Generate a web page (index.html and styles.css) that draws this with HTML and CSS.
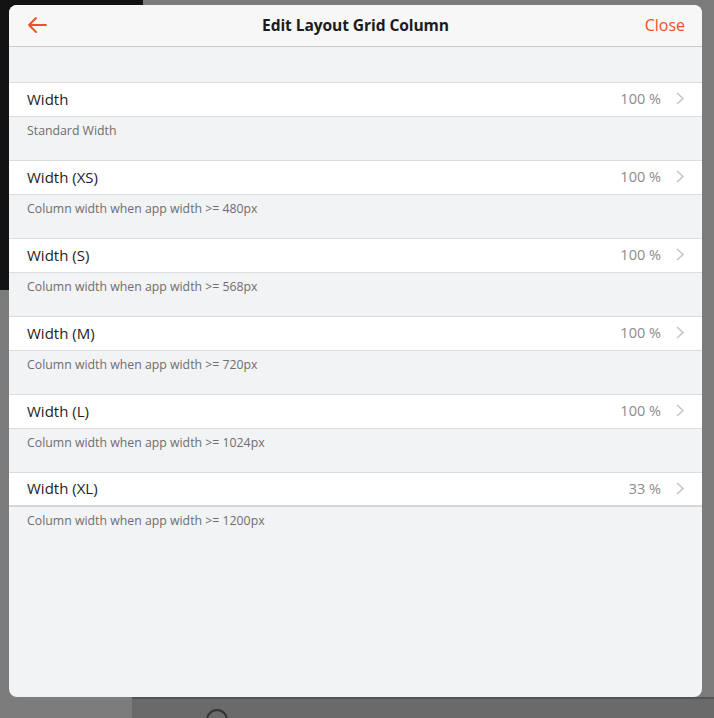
FILE: index.html
```html
<!DOCTYPE html>
<html>
<head>
<meta charset="utf-8">
<link rel="stylesheet" href="styles.css">
</head>
<body>
<div class="backdrop">
  <div class="bg-photo"></div>
  <div class="bg-side"></div>
  <div class="bg-top"></div>
  <div class="bg-bottom"><span class="bg-circle"></span></div>
</div>
<div class="modal">
  <header class="header">
    <button class="back" aria-label="Back">
      <svg width="20" height="16" viewBox="0 0 20 16"><path d="M19 8H2M9 1L2 8l7 7" fill="none" stroke="#ef4f25" stroke-width="1.8" stroke-linecap="round" stroke-linejoin="round"/></svg>
    </button>
    <h1 class="title">Edit Layout Grid Column</h1>
    <button class="close">Close</button>
  </header>
  <div class="content">
    <div class="spacer"></div>
    <div class="row"><span class="label">Width</span><span class="value">100 %</span><svg class="chev" width="8" height="13" viewBox="0 0 8 13"><path d="M1 1l6 5.5L1 12" fill="none" stroke="#c8c8c8" stroke-width="1.6"/></svg></div>
    <div class="desc">Standard Width</div>
    <div class="row"><span class="label">Width (XS)</span><span class="value">100 %</span><svg class="chev" width="8" height="13" viewBox="0 0 8 13"><path d="M1 1l6 5.5L1 12" fill="none" stroke="#c8c8c8" stroke-width="1.6"/></svg></div>
    <div class="desc">Column width when app width &gt;= 480px</div>
    <div class="row"><span class="label">Width (S)</span><span class="value">100 %</span><svg class="chev" width="8" height="13" viewBox="0 0 8 13"><path d="M1 1l6 5.5L1 12" fill="none" stroke="#c8c8c8" stroke-width="1.6"/></svg></div>
    <div class="desc">Column width when app width &gt;= 568px</div>
    <div class="row"><span class="label">Width (M)</span><span class="value">100 %</span><svg class="chev" width="8" height="13" viewBox="0 0 8 13"><path d="M1 1l6 5.5L1 12" fill="none" stroke="#c8c8c8" stroke-width="1.6"/></svg></div>
    <div class="desc">Column width when app width &gt;= 720px</div>
    <div class="row"><span class="label">Width (L)</span><span class="value">100 %</span><svg class="chev" width="8" height="13" viewBox="0 0 8 13"><path d="M1 1l6 5.5L1 12" fill="none" stroke="#c8c8c8" stroke-width="1.6"/></svg></div>
    <div class="desc">Column width when app width &gt;= 1024px</div>
    <div class="row last"><span class="label">Width (XL)</span><span class="value">33 %</span><svg class="chev" width="8" height="13" viewBox="0 0 8 13"><path d="M1 1l6 5.5L1 12" fill="none" stroke="#c8c8c8" stroke-width="1.6"/></svg></div>
    <div class="desc">Column width when app width &gt;= 1200px</div>
  </div>
</div>
</body>
</html>
```

FILE: styles.css
```css
* { box-sizing: border-box; }
html, body { margin: 0; padding: 0; }
body {
  width: 714px;
  height: 718px;
  overflow: hidden;
  background: #7a7a7a;
  font-family: "Open Sans", "Noto Sans", "Liberation Sans", sans-serif;
  position: relative;
}
.backdrop { position: absolute; inset: 0; }
.bg-photo { position: absolute; left: 0; top: 0; width: 143px; height: 290px; background: #131313; }
.bg-side { position: absolute; left: 0; top: 290px; width: 132px; height: 428px; background: #7c7c7c; }
.bg-top { position: absolute; left: 143px; top: 0; right: 0; height: 697px; background: #7b7b7b; }
.bg-bottom { position: absolute; left: 132px; top: 697px; right: 0; height: 21px; background: #6a6a6a; border-top: 2px solid #555; }
.bg-circle { position: absolute; left: 74px; top: 10px; width: 22px; height: 22px; border: 2px solid #333; border-radius: 50%; }

.modal {
  position: absolute;
  left: 9px; top: 5px;
  width: 693px; height: 692px;
  background: #f2f3f5;
  border-radius: 8px;
  overflow: hidden;
  display: flex;
  flex-direction: column;
}
.header {
  height: 42px;
  background: #f7f7f7;
  border-bottom: 1px solid #c9c9c9;
  display: flex;
  align-items: center;
  justify-content: space-between;
  padding: 0 17px 2px 18px;
  position: relative;
}
.back { background: none; border: 0; padding: 0; margin: 0; width: 20px; height: 16px; display: flex; }
.title {
  margin: 0;
  position: absolute;
  left: 0; right: 0;
  top: 10px;
  text-align: center;
  font-size: 15.6px;
  line-height: 20px;
  font-weight: 700;
  color: #1c1c1c;
  pointer-events: none;
  letter-spacing: -0.1px;
}
.close {
  background: none; border: 0; padding: 0;
  font-family: inherit;
  font-size: 16px;
  color: #ef4f25;
}
.content { flex: 1; }
.spacer { height: 35px; }
.row {
  height: 35px;
  background: #fff;
  border-top: 1px solid #dcdcdc;
  border-bottom: 1px solid #dcdcdc;
  display: flex;
  align-items: center;
  padding: 0 18px 2px 18px;
}
.row.last { border-bottom: 2px solid #d6d6d6; }
.label { flex: 1; font-size: 15px; color: #1e1e1e; }
.value { font-size: 14.5px; color: #8c8c8c; margin-right: 15px; }
.chev { display: block; flex: none; }
.desc {
  height: 43px;
  padding: 5px 18px 0;
  font-size: 12.3px;
  color: #6e6e6e;
}
```
